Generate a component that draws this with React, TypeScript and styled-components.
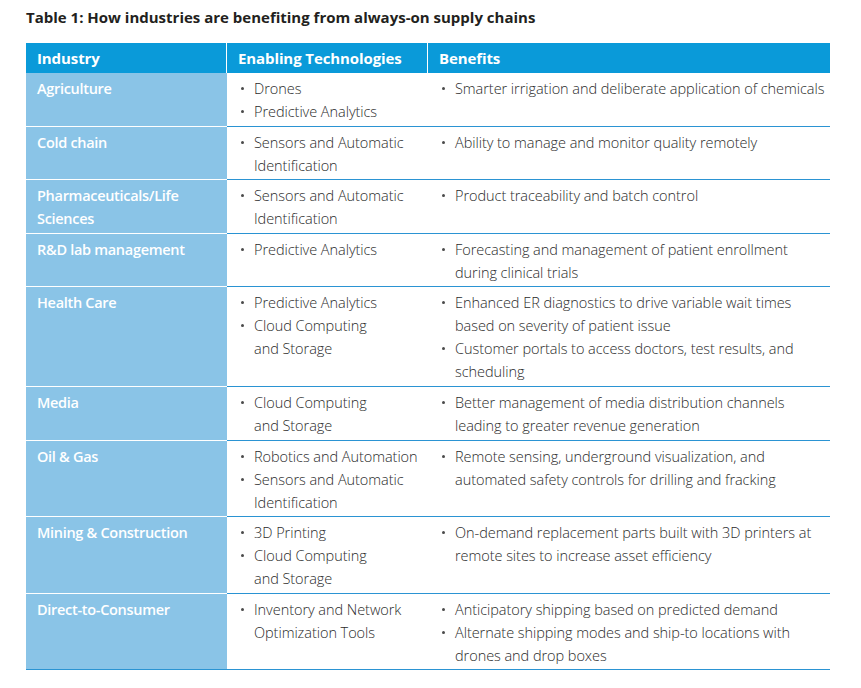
import styled, {createGlobalStyle} from 'styled-components';

type Row = {
  industry: string;
  tech: string[][];
  benefits: string[];
};

// tech entries are split where the source table breaks the line
const rows: Row[] = [
  {
    industry: 'Agriculture',
    tech: [['Drones'], ['Predictive Analytics']],
    benefits: ['Smarter irrigation and deliberate application of chemicals'],
  },
  {
    industry: 'Cold chain',
    tech: [['Sensors and Automatic', 'Identification']],
    benefits: ['Ability to manage and monitor quality remotely'],
  },
  {
    industry: 'Pharmaceuticals/Life Sciences',
    tech: [['Sensors and Automatic', 'Identification']],
    benefits: ['Product traceability and batch control'],
  },
  {
    industry: 'R&D lab management',
    tech: [['Predictive Analytics']],
    benefits: ['Forecasting and management of patient enrollment during clinical trials'],
  },
  {
    industry: 'Health Care',
    tech: [['Predictive Analytics'], ['Cloud Computing', 'and Storage']],
    benefits: [
      'Enhanced ER diagnostics to drive variable wait times based on severity of patient issue',
      'Customer portals to access doctors, test results, and scheduling',
    ],
  },
  {
    industry: 'Media',
    tech: [['Cloud Computing', 'and Storage']],
    benefits: ['Better management of media distribution channels leading to greater revenue generation'],
  },
  {
    industry: 'Oil & Gas',
    tech: [['Robotics and Automation'], ['Sensors and Automatic', 'Identification']],
    benefits: [
      'Remote sensing, underground visualization, and automated safety controls for drilling and fracking',
    ],
  },
  {
    industry: 'Mining & Construction',
    tech: [['3D Printing'], ['Cloud Computing', 'and Storage']],
    benefits: [
      'On-demand replacement parts built with 3D printers at remote sites to increase asset efficiency',
    ],
  },
  {
    industry: 'Direct-to-Consumer',
    tech: [['Inventory and Network', 'Optimization Tools']],
    benefits: [
      'Anticipatory shipping based on predicted demand',
      'Alternate shipping modes and ship-to locations with drones and drop boxes',
    ],
  },
];

const GlobalStyle = createGlobalStyle`
  body {
    margin: 0;
    background: #ffffff;
    font-family: "Open Sans", "Noto Sans", sans-serif;
  }
`;

const Page = styled.div`
  padding: 7px 31px 0 26px;
`;

const Title = styled.h1`
  margin: 0 0 16px;
  font-size: 15px;
  line-height: 20px;
  font-weight: 700;
  color: #231f20;
`;

const Table = styled.div`
  display: grid;
  grid-template-columns: 201px 201px 1fr;
  width: 804px;
`;

const HeadCell = styled.div<{$last?: boolean}>`
  height: 30px;
  display: flex;
  align-items: center;
  padding: 0 11px;
  background: #0a9ad9;
  color: #ffffff;
  font-size: 15px;
  font-weight: 700;
  letter-spacing: -0.1px;
  border-right: ${p => (p.$last ? 'none' : '1px solid #ffffff')};
`;

const IndustryCell = styled.div<{$end?: boolean}>`
  padding: 4px 11px 2.6px;
  background: #8ac4e7;
  color: #ffffff;
  font-size: 14.5px;
  font-weight: 600;
  letter-spacing: -0.3px;
  line-height: 23px;
  border-bottom: 1px solid ${p => (p.$end ? '#2b94d3' : '#ffffff')};
`;

const Cell = styled.div`
  padding: 4px 0 2.6px 12px;
  border-bottom: 1px solid #2b94d3;
  background: #ffffff;
`;

const List = styled.ul`
  margin: 0;
  padding: 0;
  list-style: none;
`;

const Item = styled.li`
  position: relative;
  padding-left: 15px;
  font-size: 14.5px;
  font-weight: 300;
  letter-spacing: -0.05px;
  line-height: 23px;
  color: #2b2b2b;
  &::before {
    content: '';
    position: absolute;
    left: 2px;
    top: 10px;
    width: 3px;
    height: 3px;
    border-radius: 50%;
    background: #4a4a4a;
  }
`;

export default function App() {
  return (
    <Page>
      <GlobalStyle />
      <Title>Table 1: How industries are benefiting from always-on supply chains</Title>
      <Table>
        <HeadCell>Industry</HeadCell>
        <HeadCell>Enabling Technologies</HeadCell>
        <HeadCell $last>Benefits</HeadCell>
        {rows.map((row, i) => {
          const end = i === rows.length - 1;
          return [
            <IndustryCell key={`i${i}`} $end={end}>
              {row.industry}
            </IndustryCell>,
            <Cell key={`t${i}`}>
              <List>
                {row.tech.map(lines => (
                  <Item key={lines.join(' ')}>
                    {lines.map((l, j) => (
                      <span key={l}>
                        {j > 0 && <br />}
                        {l}
                      </span>
                    ))}
                  </Item>
                ))}
              </List>
            </Cell>,
            <Cell key={`b${i}`}>
              <List>
                {row.benefits.map(b => (
                  <Item key={b}>{b}</Item>
                ))}
              </List>
            </Cell>,
          ];
        })}
      </Table>
    </Page>
  );
}
